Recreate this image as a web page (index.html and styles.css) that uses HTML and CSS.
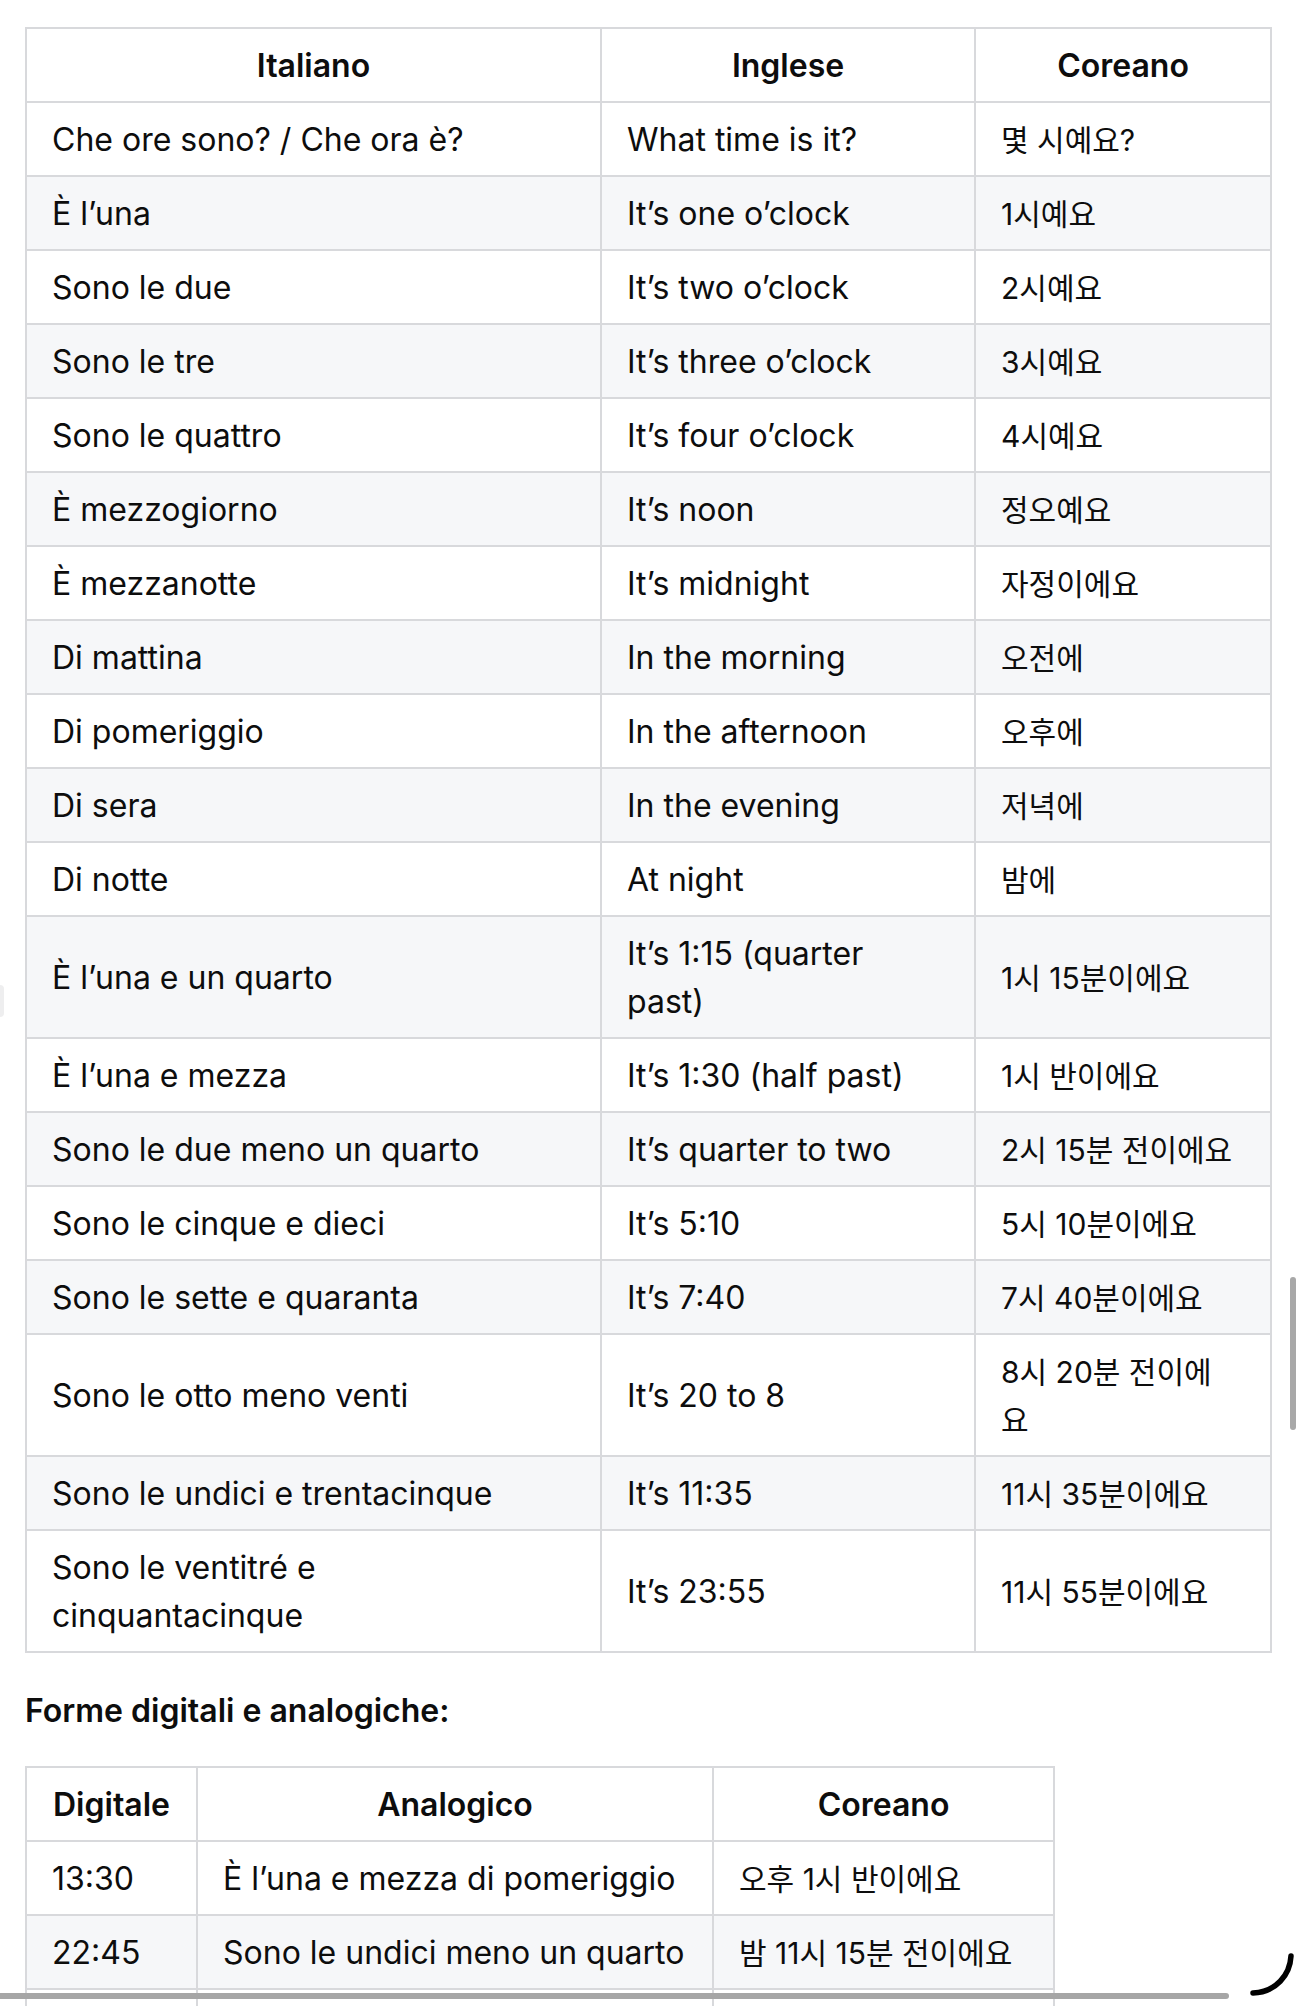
FILE: index.html
```html
<!DOCTYPE html>
<html lang="it">
<head>
<meta charset="utf-8">
<title>Che ore sono</title>
<link rel="stylesheet" href="styles.css">
</head>
<body>
<main class="content">
  <table class="grid grid-main">
    <colgroup>
      <col class="c-it"><col class="c-en"><col class="c-ko">
    </colgroup>
    <thead>
      <tr><th>Italiano</th><th>Inglese</th><th>Coreano</th></tr>
    </thead>
    <tbody>
      <tr><td>Che ore sono? / Che ora è?</td><td>What time is it?</td><td class="ko">몇 시예요?</td></tr>
      <tr><td>È l’una</td><td>It’s one o’clock</td><td class="ko">1시예요</td></tr>
      <tr><td>Sono le due</td><td>It’s two o’clock</td><td class="ko">2시예요</td></tr>
      <tr><td>Sono le tre</td><td>It’s three o’clock</td><td class="ko">3시예요</td></tr>
      <tr><td>Sono le quattro</td><td>It’s four o’clock</td><td class="ko">4시예요</td></tr>
      <tr><td>È mezzogiorno</td><td>It’s noon</td><td class="ko">정오예요</td></tr>
      <tr><td>È mezzanotte</td><td>It’s midnight</td><td class="ko">자정이에요</td></tr>
      <tr><td>Di mattina</td><td>In the morning</td><td class="ko">오전에</td></tr>
      <tr><td>Di pomeriggio</td><td>In the afternoon</td><td class="ko">오후에</td></tr>
      <tr><td>Di sera</td><td>In the evening</td><td class="ko">저녁에</td></tr>
      <tr><td>Di notte</td><td>At night</td><td class="ko">밤에</td></tr>
      <tr><td>È l’una e un quarto</td><td>It’s 1:15 (quarter past)</td><td class="ko">1시 15분이에요</td></tr>
      <tr><td>È l’una e mezza</td><td>It’s 1:30 (half past)</td><td class="ko">1시 반이에요</td></tr>
      <tr><td>Sono le due meno un quarto</td><td>It’s quarter to two</td><td class="ko">2시 15분 전이에요</td></tr>
      <tr><td>Sono le cinque e dieci</td><td>It’s 5:10</td><td class="ko">5시 10분이에요</td></tr>
      <tr><td>Sono le sette e quaranta</td><td>It’s 7:40</td><td class="ko">7시 40분이에요</td></tr>
      <tr><td>Sono le otto meno venti</td><td>It’s 20 to 8</td><td class="ko">8시 20분 전이에요</td></tr>
      <tr><td>Sono le undici e trentacinque</td><td>It’s 11:35</td><td class="ko">11시 35분이에요</td></tr>
      <tr><td>Sono le ventitré e cinquantacinque</td><td>It’s 23:55</td><td class="ko">11시 55분이에요</td></tr>
    </tbody>
  </table>

  <h3 class="section-title">Forme digitali e analogiche:</h3>

  <table class="grid grid-forms">
    <colgroup>
      <col class="c-dig"><col class="c-ana"><col class="c-ko2">
    </colgroup>
    <thead>
      <tr><th>Digitale</th><th>Analogico</th><th>Coreano</th></tr>
    </thead>
    <tbody>
      <tr><td>13:30</td><td>È l’una e mezza di pomeriggio</td><td class="ko">오후 1시 반이에요</td></tr>
      <tr><td>22:45</td><td>Sono le undici meno un quarto</td><td class="ko">밤 11시 15분 전이에요</td></tr>
      <tr class="row-cut"><td></td><td></td><td></td></tr>
    </tbody>
  </table>
</main>

<div class="edge-tab"></div>
<div class="vscroll"></div>
<div class="hscroll"></div>
<svg class="corner-mark" width="60" height="60" viewBox="0 0 60 60" aria-hidden="true">
  <path d="M51 11 C50 30 36 47 13 48" fill="none" stroke="#000" stroke-width="5.5" stroke-linecap="round"/>
</svg>
</body>
</html>
```

FILE: styles.css
```css
html, body {
  margin: 0;
  padding: 0;
  background: #ffffff;
}

body {
  width: 1303px;
  height: 2006px;
  overflow: hidden;
  position: relative;
  font-family: Inter, "Noto Sans CJK KR", "Noto Sans", sans-serif;
  font-size: 32px;
  line-height: 48px;
  color: #0d0d0d;
}

.content {
  padding: 27px 0 0 25px;
}

.grid {
  border-collapse: collapse;
  table-layout: fixed;
  border: 2px solid #d8d9dc;
}

.grid th,
.grid td {
  border: 2px solid #d8d9dc;
  padding: 13px 36px 11px 25px;
  text-align: left;
  vertical-align: middle;
  font-weight: 400;
}

.grid th {
  padding-right: 25px;
  text-align: center;
  font-weight: 600;
}

.grid td.ko {
  font-size: 30px;
}

.grid tbody tr:nth-child(even) td {
  background: #f6f7f9;
}

.grid .row-cut td {
  height: 48px;
}

.grid-main {
  width: 1245px;
}

.c-it { width: 575px; }
.c-en { width: 374px; }
.c-ko { width: 296px; }

.grid-forms {
  width: 1028px;
}

.grid-forms td {
  padding-right: 20px;
}

.c-dig { width: 171px; }
.c-ana { width: 516px; }
.c-ko2 { width: 341px; }

.section-title {
  margin: 34px 0 31px 0;
  font-size: 32px;
  line-height: 48px;
  font-weight: 600;
}

.edge-tab {
  position: absolute;
  left: -6px;
  top: 985px;
  width: 10px;
  height: 32px;
  border-radius: 4px;
  background: #eeeeef;
}

.vscroll {
  position: absolute;
  left: 1290px;
  top: 1277px;
  width: 6px;
  height: 153px;
  border-radius: 3px;
  background: #a8a8a8;
}

.hscroll {
  position: absolute;
  left: -4px;
  top: 1993px;
  width: 1233px;
  height: 6px;
  border-radius: 3px;
  background: #a6a6a6;
}

.corner-mark {
  position: absolute;
  left: 1240px;
  top: 1945px;
}
```
